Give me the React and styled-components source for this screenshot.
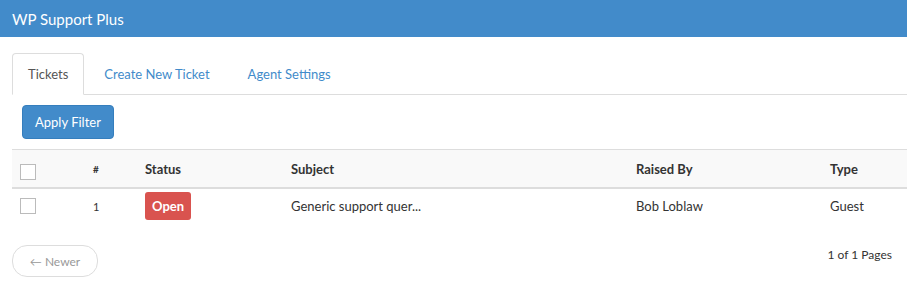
import React from "react";
import styled, { createGlobalStyle } from "styled-components";

const Global = createGlobalStyle`
  body {
    margin: 0;
    font-family: Lato, "Open Sans", sans-serif;
    font-size: 13px;
    color: #333;
    background: #fff;
  }
`;

const TopBar = styled.div`
  height: 37px;
  background: #428bca;
  color: #fff;
  font-size: 15px;
  display: flex;
  align-items: center;
  padding-left: 12px;
`;

const Content = styled.div`
  padding: 16px 0 0 12px;
`;

const Tabs = styled.ul`
  list-style: none;
  margin: 0;
  padding: 0;
  display: flex;
  border-bottom: 1px solid #ddd;
  height: 41px;
`;

const Tab = styled.li`
  height: 42px;
  box-sizing: border-box;
  display: flex;
  align-items: center;
  padding: 0 ${(p) => (p.$active ? "15px" : "17px")};
  margin-right: 2px;
  border: 1px solid ${(p) => (p.$active ? "#ddd" : "transparent")};
  border-bottom-color: ${(p) => (p.$active ? "#fff" : "transparent")};
  border-radius: 4px 4px 0 0;
  background: ${(p) => (p.$active ? "#fff" : "transparent")};
  color: ${(p) => (p.$active ? "#555" : "#428bca")};
  font-size: 13px;
`;

const Toolbar = styled.div`
  padding: 10px 0 10px 10px;
`;

const Button = styled.button`
  font-family: inherit;
  font-size: 13px;
  color: #fff;
  background: #428bca;
  border: 1px solid #357ebd;
  border-radius: 4px;
  height: 34px;
  padding: 0 12px;
`;

const Table = styled.table`
  width: 100%;
  border-collapse: collapse;
  border-top: 1px solid #ddd;
`;

const Th = styled.th`
  text-align: left;
  font-weight: 700;
  height: 37px;
  background: #f9f9f9;
  border-bottom: 2px solid #ddd;
  padding: 0 0 0 ${(p) => p.$pad || 0}px;
  width: ${(p) => p.$w || "auto"};
  font-size: ${(p) => (p.$small ? "10px" : "13px")};
`;

const Td = styled.td`
  height: 34px;
  padding: 0 0 0 ${(p) => p.$pad || 0}px;
  font-size: ${(p) => (p.$small ? "11px" : "13px")};
`;

const Check = styled.span`
  display: block;
  width: 14px;
  height: 14px;
  border: 1px solid #bbb;
  background: #fff;
  margin-top: ${(p) => p.$mt || 0}px;
`;

const Badge = styled.span`
  display: inline-block;
  background: #d9534f;
  color: #fff;
  font-weight: 700;
  font-size: 13px;
  border-radius: 3px;
  padding: 6px 7px;
`;

const Footer = styled.div`
  display: flex;
  justify-content: space-between;
  align-items: center;
  padding: 22px 15px 0 0;
`;

const Pager = styled.button`
  font-family: inherit;
  font-size: 12px;
  color: #999;
  background: #fff;
  border: 1px solid #ddd;
  border-radius: 15px;
  height: 32px;
  width: 86px;
`;

const PageInfo = styled.span`
  font-size: 12px;
  margin-top: -14px;
`;

export default function App() {
  return (
    <>
      <Global />
      <TopBar>WP Support Plus</TopBar>
      <Content>
        <Tabs>
          <Tab $active>Tickets</Tab>
          <Tab>Create New Ticket</Tab>
          <Tab>Agent Settings</Tab>
        </Tabs>
        <Toolbar>
          <Button>Apply Filter</Button>
        </Toolbar>
        <Table>
          <thead>
            <tr>
              <Th $pad={8} $w="73px"><Check $mt={6} /></Th>
              <Th $small $w="52px">#</Th>
              <Th $w="146px">Status</Th>
              <Th $w="345px">Subject</Th>
              <Th $w="194px">Raised By</Th>
              <Th>Type</Th>
            </tr>
          </thead>
          <tbody>
            <tr>
              <Td $pad={8}><Check /></Td>
              <Td $small>1</Td>
              <Td><Badge>Open</Badge></Td>
              <Td>Generic support quer...</Td>
              <Td>Bob Loblaw</Td>
              <Td>Guest</Td>
            </tr>
          </tbody>
        </Table>
        <Footer>
          <Pager>← Newer</Pager>
          <PageInfo>1 of 1 Pages</PageInfo>
        </Footer>
      </Content>
    </>
  );
}
